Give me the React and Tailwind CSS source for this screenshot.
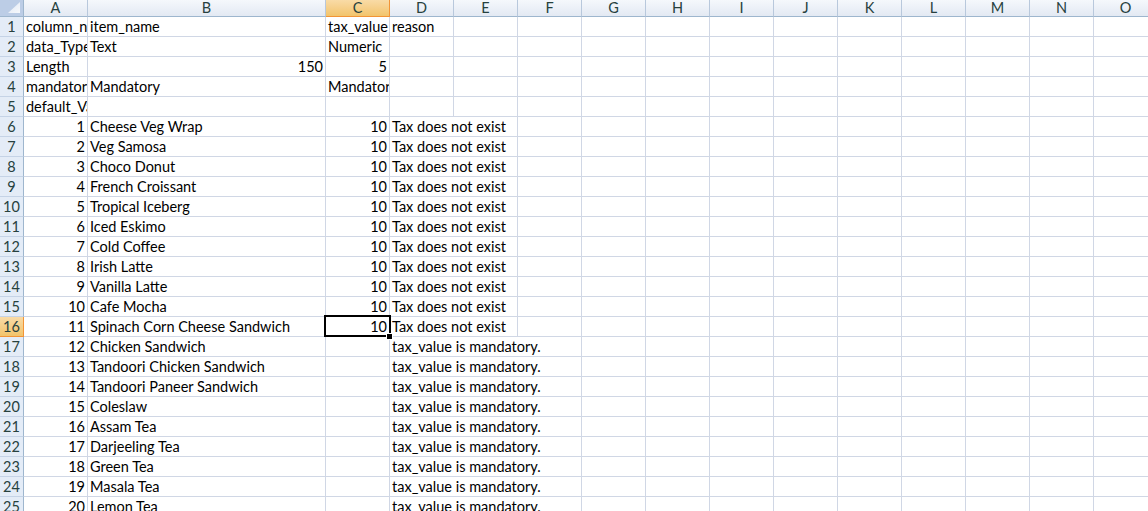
import React from 'react';

const COLS = ['A', 'B', 'C', 'D', 'E', 'F', 'G', 'H', 'I', 'J', 'K', 'L', 'M', 'N', 'O'];

const widthFor = (col, span) => {
  if (span === 3) return 'w-[192px]';
  if (span === 2) return 'w-[128px]';
  if (col === 'B') return 'w-[238px]';
  return 'w-[64px]';
};

const items = [
  'Cheese Veg Wrap', 'Veg Samosa', 'Choco Donut', 'French Croissant', 'Tropical Iceberg',
  'Iced Eskimo', 'Cold Coffee', 'Irish Latte', 'Vanilla Latte', 'Cafe Mocha',
  'Spinach Corn Cheese Sandwich', 'Chicken Sandwich', 'Tandoori Chicken Sandwich',
  'Tandoori Paneer Sandwich', 'Coleslaw', 'Assam Tea', 'Darjeeling Tea', 'Green Tea',
  'Masala Tea', 'Lemon Tea',
];

// each row: { A: {t, r}, ... , spanD }
const buildRows = () => {
  const rows = [
    { A: { t: 'column_name' }, B: { t: 'item_name' }, C: { t: 'tax_value' }, D: { t: 'reason' } },
    { A: { t: 'data_Type' }, B: { t: 'Text' }, C: { t: 'Numeric' } },
    { A: { t: 'Length' }, B: { t: '150', r: true }, C: { t: '5', r: true } },
    { A: { t: 'mandatory' }, B: { t: 'Mandatory' }, C: { t: 'Mandatory' } },
    { A: { t: 'default_Value' } },
  ];
  items.forEach((name, i) => {
    const ok = i < 11;
    rows.push({
      A: { t: String(i + 1), r: true },
      B: { t: name },
      C: ok ? { t: '10', r: true } : undefined,
      D: { t: ok ? 'Tax does not exist' : 'tax_value is mandatory.' },
      spanD: ok ? 2 : 3,
    });
  });
  return rows;
};

const rows = buildRows();

const Corner = () => (
  <div className="w-[24px] h-[17px] shrink-0 bg-[#bccde6] border-r border-b border-[#9eb6ce] flex items-end justify-end pr-[3px] pb-[3px]">
    <svg width="12" height="11" viewBox="0 0 12 11">
      <defs>
        <linearGradient id="tri" x1="0" y1="0" x2="1" y2="1">
          <stop offset="0" stopColor="#dfe7f3" />
          <stop offset="1" stopColor="#f7f9fc" />
        </linearGradient>
      </defs>
      <polygon points="12,0 12,11 0,11" fill="url(#tri)" />
    </svg>
  </div>
);

const ColumnHeader = ({ col }) => {
  const selected = col === 'C';
  return (
    <div
      className={`${widthFor(col)} h-[17px] shrink-0 flex items-center justify-center border-r border-b ${
        selected
          ? 'bg-gradient-to-b from-[#f9dba6] to-[#f2c46b] border-[#f29436] text-[#27413e]'
          : 'bg-gradient-to-b from-[#f5f8fc] to-[#e3e9f3] border-r-[#b8c8dc] border-b-[#9eb6ce] text-[#27413e]'
      }`}
    >
      {col}
    </div>
  );
};

const Cell = ({ col, cell, span, selected }) => (
  <div
    className={`${widthFor(col, span)} relative h-[20px] shrink-0 flex items-end px-[2px] border-r border-b border-[#d0d7e5] whitespace-nowrap ${
      selected ? 'overflow-visible' : 'overflow-hidden'
    } ${cell && cell.r ? 'justify-end' : 'justify-start'}`}
  >
    <span className="block leading-[18px]">{cell ? cell.t : ''}</span>
    {selected && (
      <>
        <div className="absolute z-10 -left-[2px] -top-[2px] w-[67px] h-[22px] border-2 border-black pointer-events-none" />
        <div className="absolute z-20 -right-[4px] -bottom-[4px] w-[7px] h-[7px] bg-black border border-white" />
      </>
    )}
  </div>
);

const Row = ({ index, row }) => {
  const selected = index === 16;
  const cells = [];
  let skip = 0;
  COLS.forEach((col) => {
    if (skip > 0) {
      skip -= 1;
      return;
    }
    let span = 1;
    if (col === 'D' && row.spanD) {
      span = row.spanD;
      skip = span - 1;
    }
    cells.push(
      <Cell key={col} col={col} cell={row[col]} span={span} selected={selected && col === 'C'} />
    );
  });
  return (
    <div className="flex">
      <div
        className={`w-[24px] h-[20px] shrink-0 flex items-center justify-center border-r border-b ${
          selected
            ? 'bg-gradient-to-b from-[#f9dba6] to-[#f2c46b] border-[#f29436]'
            : 'bg-[#e4ecf7] border-r-[#9eb6ce] border-b-[#c5d3e6]'
        } text-[#27413e]`}
      >
        {index}
      </div>
      {cells}
    </div>
  );
};

export default function App() {
  return (
    <div
      className="w-[1148px] h-[511px] overflow-hidden bg-white text-black text-[14.5px]"
      style={{ fontFamily: 'Lato, "Liberation Sans", sans-serif' }}
    >
      <div className="w-[1160px]">
        <div className="flex">
          <Corner />
          {COLS.map((c) => (
            <ColumnHeader key={c} col={c} />
          ))}
        </div>
        {rows.map((row, i) => (
          <Row key={i} index={i + 1} row={row} />
        ))}
      </div>
    </div>
  );
}
